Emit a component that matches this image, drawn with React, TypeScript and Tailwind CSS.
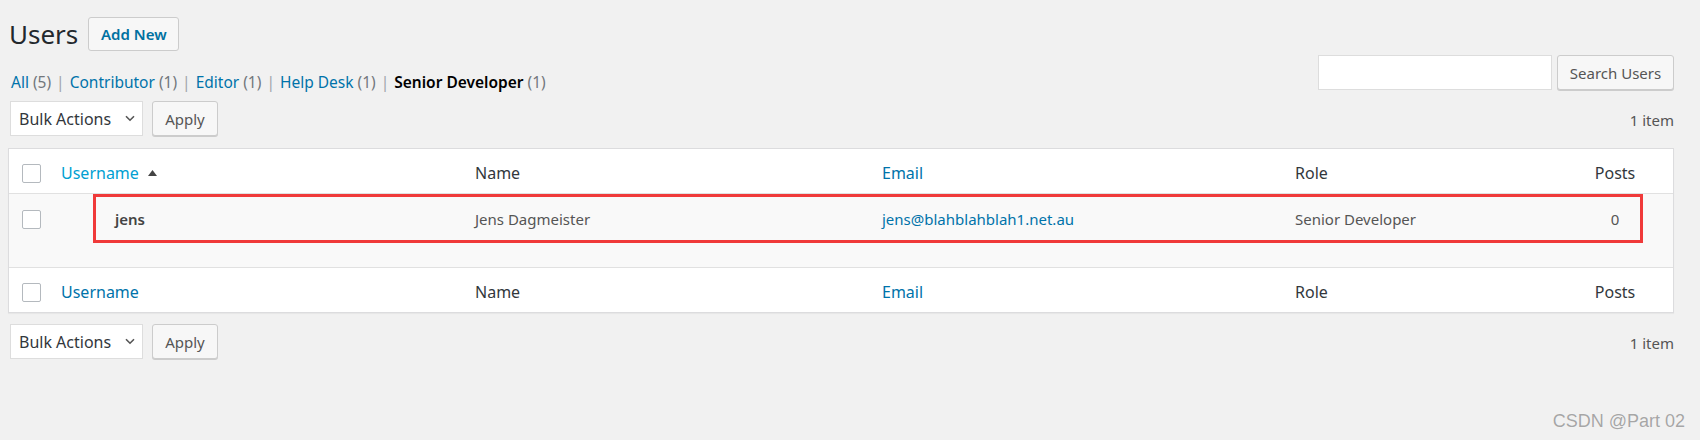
const cols = 'grid grid-cols-[42px_414px_407px_413px_272px_116px]';

function Checkbox() {
    return <span className="block h-[19px] w-[19px] rounded-[2px] border border-[#b4b9be] bg-white" />;
}

function SortArrow() {
    return (
        <svg width="9" height="6" viewBox="0 0 9 6" className="ml-[9px]">
            <path d="M4.5 0L9 6H0z" fill="#444" />
        </svg>
    );
}

function Sep() {
    return <span className="px-[5px] text-[#a0a5aa]">|</span>;
}

function TableNav() {
    return (
        <div className="flex h-[35px] items-center justify-between">
            <div className="flex items-center">
                <div className="ml-[2px] flex h-[35px] w-[133px] items-center justify-between border border-[#dddddd] bg-white pr-[7px] pl-[8px] text-[16px] text-[#32373c]">
                    <span>Bulk Actions</span>
                    <svg width="10" height="7" viewBox="0 0 10 7">
                        <path d="M1 1.2L5 5.2L9 1.2" fill="none" stroke="#555" strokeWidth="1.6" />
                    </svg>
                </div>
                <button className="ml-[9px] h-[35px] w-[66px] rounded-[3px] border border-[#cccccc] bg-[#f7f7f7] text-[15px] text-[#555] shadow-[0_1px_0_#cccccc]">
                    Apply
                </button>
            </div>
            <span className="pt-[3px] text-[15px] leading-[22px] text-[#555]">1 item</span>
        </div>
    );
}

function HeaderRow({ sorted, top }: { sorted?: boolean; top?: boolean }) {
    return (
        <div className={`${cols} h-[45px] items-center pt-[4px] text-[16px] text-[#32373c] ${top ? 'border-b' : 'border-t'} border-[#e1e1e1]`}>
            <div className="pl-[13px]">
                <Checkbox />
            </div>
            <div className="flex items-center pl-[10px]">
                <span className={sorted ? 'text-[#00a0d2]' : 'text-[#0073aa]'}>Username</span>
                {sorted && <SortArrow />}
            </div>
            <div className="pl-[10px]">Name</div>
            <div className="pl-[10px] text-[#0073aa]">Email</div>
            <div className="pl-[10px]">Role</div>
            <div className="text-center">Posts</div>
        </div>
    );
}

export default function App() {
    return (
        <div className="relative min-h-[440px] bg-[#f1f1f1] pr-[26px] pl-2 font-['Noto_Sans',sans-serif] leading-[22px]">
            <div className="flex items-center gap-[10px] pt-[17px]">
                <h1 className="ml-[1px] text-[26px] leading-[34px] font-normal text-[#23282d]">Users</h1>
                <button className="h-[34px] w-[91px] rounded-[3px] border border-[#cccccc] bg-[#f7f7f7] text-[15px] font-semibold text-[#0071a1]">
                    Add New
                </button>
            </div>

            <div className="mt-1 flex items-start justify-between">
                <div className="pt-[16px] pl-[3px] text-[15.5px] text-[#72777c]">
                    <a className="text-[#0073aa]">All</a> (5)
                    <Sep />
                    <a className="text-[#0073aa]">Contributor</a> (1)
                    <Sep />
                    <a className="text-[#0073aa]">Editor</a> (1)
                    <Sep />
                    <a className="text-[#0073aa]">Help Desk</a> (1)
                    <Sep />
                    <a className="font-semibold text-black">Senior Developer</a> (1)
                </div>
                <div className="flex gap-[5px]">
                    <input className="h-[35px] w-[234px] border border-[#dddddd] bg-white outline-none" />
                    <button className="h-[35px] w-[117px] rounded-[3px] border border-[#cccccc] bg-[#f7f7f7] text-[15px] text-[#555] shadow-[0_1px_0_#cccccc]">
                        Search Users
                    </button>
                </div>
            </div>

            <div className="mt-2">
                <TableNav />
            </div>

            <div className="relative mt-3 border border-[#dcdcde] bg-white shadow-[0_1px_1px_rgba(0,0,0,0.04)]">
                <HeaderRow sorted top />
                <div className={`${cols} h-[73px] items-start bg-[#f9f9f9] pt-[14px] text-[15px] text-[#555]`}>
                    <div className="flex h-[22px] items-center pl-[13px]">
                        <Checkbox />
                    </div>
                    <div className="pl-[64px] font-semibold text-[#444]">jens</div>
                    <div className="pl-[10px]">Jens Dagmeister</div>
                    <div className="pl-[10px] text-[#0073aa]">jens@blahblahblah1.net.au</div>
                    <div className="pl-[10px]">Senior Developer</div>
                    <div className="text-center">0</div>
                </div>
                <HeaderRow />
                <div className="absolute top-[45px] left-[84px] h-[49px] w-[1550px] border-[3px] border-[#f03a3a]" />
            </div>

            <div className="mt-[11px]">
                <TableNav />
            </div>

            <span className="absolute top-[410px] right-[15px] font-['Liberation_Sans',sans-serif] text-[18px] text-[#a6a6a6] [text-shadow:0_0_1px_#fff]">
                CSDN @Part 02
            </span>
        </div>
    );
}
